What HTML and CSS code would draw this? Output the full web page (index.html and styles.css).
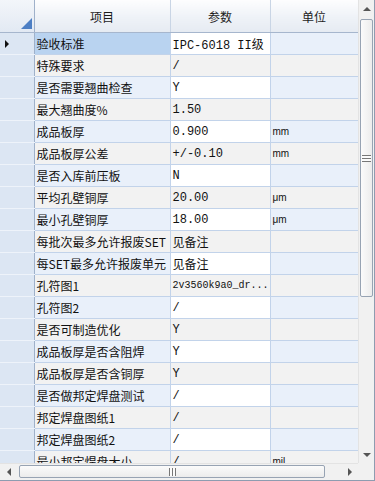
FILE: index.html
```html
<!DOCTYPE html>
<html lang="zh-CN">
<head>
    <meta charset="UTF-8">
    <title>参数</title>
    <link rel="stylesheet" href="styles.css">
</head>
<body>
    <div class="grid">
        <div class="view">
            <table class="sheet">
                <colgroup>
                    <col class="c-rh"><col class="c-item"><col class="c-val"><col class="c-unit">
                </colgroup>
                <thead>
                    <tr>
                        <th class="corner"><span class="tri"></span></th>
                        <th>项目</th>
                        <th>参数</th>
                        <th>单位</th>
                    </tr>
                </thead>
                <tbody>
                    <tr class="sel"><td class="rh"><span class="cur"></span></td><td class="item">验收标准</td><td class="val">IPC-6018 II级</td><td class="unit"></td></tr>
                    <tr><td class="rh"></td><td class="item">特殊要求</td><td class="val">/</td><td class="unit"></td></tr>
                    <tr><td class="rh"></td><td class="item">是否需要翘曲检查</td><td class="val">Y</td><td class="unit"></td></tr>
                    <tr><td class="rh"></td><td class="item">最大翘曲度%</td><td class="val">1.50</td><td class="unit"></td></tr>
                    <tr><td class="rh"></td><td class="item">成品板厚</td><td class="val">0.900</td><td class="unit">mm</td></tr>
                    <tr><td class="rh"></td><td class="item">成品板厚公差</td><td class="val">+/-0.10</td><td class="unit">mm</td></tr>
                    <tr><td class="rh"></td><td class="item">是否入库前压板</td><td class="val">N</td><td class="unit"></td></tr>
                    <tr><td class="rh"></td><td class="item">平均孔壁铜厚</td><td class="val">20.00</td><td class="unit">μm</td></tr>
                    <tr><td class="rh"></td><td class="item">最小孔壁铜厚</td><td class="val">18.00</td><td class="unit">μm</td></tr>
                    <tr><td class="rh"></td><td class="item">每批次最多允许报废SET</td><td class="val cjk">见备注</td><td class="unit"></td></tr>
                    <tr><td class="rh"></td><td class="item">每SET最多允许报废单元</td><td class="val cjk">见备注</td><td class="unit"></td></tr>
                    <tr><td class="rh"></td><td class="item">孔符图1</td><td class="val small">2v3560k9a0_dr...</td><td class="unit"></td></tr>
                    <tr><td class="rh"></td><td class="item">孔符图2</td><td class="val">/</td><td class="unit"></td></tr>
                    <tr><td class="rh"></td><td class="item">是否可制造优化</td><td class="val">Y</td><td class="unit"></td></tr>
                    <tr><td class="rh"></td><td class="item">成品板厚是否含阻焊</td><td class="val">Y</td><td class="unit"></td></tr>
                    <tr><td class="rh"></td><td class="item">成品板厚是否含铜厚</td><td class="val">Y</td><td class="unit"></td></tr>
                    <tr><td class="rh"></td><td class="item">是否做邦定焊盘测试</td><td class="val">/</td><td class="unit"></td></tr>
                    <tr><td class="rh"></td><td class="item">邦定焊盘图纸1</td><td class="val">/</td><td class="unit"></td></tr>
                    <tr><td class="rh"></td><td class="item">邦定焊盘图纸2</td><td class="val">/</td><td class="unit"></td></tr>
                    <tr><td class="rh"></td><td class="item">最小邦定焊盘大小</td><td class="val">/</td><td class="unit">mil</td></tr>
                </tbody>
            </table>
        </div>

        <!-- vertical scrollbar -->
        <div class="vbar">
            <div class="arrow up"></div>
            <div class="vtrack">
                <div class="vthumb"><span class="grip-h"></span></div>
            </div>
            <div class="arrow down"></div>
        </div>

        <!-- horizontal scrollbar -->
        <div class="hbar">
            <div class="arrow left"></div>
            <div class="htrack">
                <div class="hthumb"><span class="grip-v"></span></div>
            </div>
            <div class="arrow right"></div>
        </div>
        <div class="sizer"></div>
    </div>
</body>
</html>
```

FILE: styles.css
```css
body {
    margin: 0;
    background: #fff;
    font-family: "Noto Sans CJK SC", "Liberation Sans", sans-serif;
}
.grid {
    display: grid;
    grid-template-columns: 358px 16px;
    grid-template-rows: 463px 17px;
    width: 374px;
    height: 480px;
    border-right: 1px solid #8e9cb0;
    border-bottom: 1px solid #8e9cb0;
    background: #f0f0f0;
}
.view {
    overflow: hidden;
    background: #fff;
}
.sheet {
    border-collapse: collapse;
    table-layout: fixed;
    width: 358px;
}
.c-rh { width: 34px; }
.c-item { width: 136px; }
.c-val { width: 100px; }
.c-unit { width: 88px; }

.sheet th {
    height: 32px;
    padding: 0;
    font-weight: normal;
    font-size: 12px;
    color: #1c1c1c;
    background: linear-gradient(#fdfdfe, #eef2f7 55%, #e6ebf2);
    border-right: 1px solid #c9d5e5;
    border-bottom: 1px solid #a6b6cd;
    text-align: center;
}
.sheet th.corner {
    position: relative;
    background: linear-gradient(#f3f6fa, #e2e9f3);
    border-right: 1px solid #9fb1ca;
}
.tri {
    position: absolute;
    right: 2px;
    bottom: 3px;
    width: 0;
    height: 0;
    border-left: 11px solid transparent;
    border-bottom: 11px solid #4d7fc4;
}
.sheet td {
    height: 21px;
    padding: 0 0 0 2px;
    border-right: 1px solid #c2d3ea;
    border-bottom: 1px solid #c2d3ea;
    white-space: nowrap;
    overflow: hidden;
    color: #111;
}
.sheet td.rh {
    position: relative;
    padding: 0;
    background: #dce6f3;
    border-right: 1px solid #9fb1ca;
    border-bottom: 1px solid #eef3fa;
}
.cur {
    position: absolute;
    left: 5px;
    top: 7px;
    width: 0;
    height: 0;
    border-top: 4px solid transparent;
    border-bottom: 4px solid transparent;
    border-left: 4px solid #111;
}
.item {
    font-size: 12px;
    background: #e9f0fa;
}
.val {
    font-family: "Liberation Mono", "Noto Sans CJK SC", monospace;
    font-size: 12px;
    background: #fff;
}
.val.cjk {
    font-family: "Noto Sans CJK SC", sans-serif;
}
.val.small {
    font-size: 10px;
}
.unit {
    font-family: "Liberation Sans", sans-serif;
    font-size: 10px;
    background: #e9f0fa;
}
.sheet tbody tr:nth-child(even) td.item,
.sheet tbody tr:nth-child(even) td.val,
.sheet tbody tr:nth-child(even) td.unit {
    background: #f2f2f2;
}
.sheet tr.sel td.item {
    background: #b9d3f0;
}

/* scrollbars */
.vbar {
    display: flex;
    flex-direction: column;
    background: #f1f1f1;
    border-left: 1px solid #e3e3e3;
}
.vtrack {
    flex: 1;
    padding: 2px 1px;
}
.vthumb {
    height: 276px;
    display: flex;
    align-items: center;
    justify-content: center;
    border: 1px solid #97a3b3;
    border-radius: 2px;
    background: linear-gradient(90deg, #fbfbfb, #ececec);
}
.grip-h {
    width: 9px;
    height: 5px;
    border-top: 1px solid #777;
    border-bottom: 1px solid #777;
    background: linear-gradient(#fbfbfb 40%, #777 40%, #777 60%, #fbfbfb 60%);
}
.hbar {
    display: flex;
    background: #f1f1f1;
    border-top: 1px solid #e3e3e3;
}
.htrack {
    flex: 1;
    padding: 1px 2px;
}
.hthumb {
    width: 306px;
    height: 13px;
    margin-left: 0;
    display: flex;
    align-items: center;
    justify-content: center;
    border: 1px solid #97a3b3;
    border-radius: 2px;
    background: linear-gradient(#fbfbfb, #ececec);
    box-sizing: border-box;
}
.grip-v {
    width: 5px;
    height: 8px;
    border-left: 1px solid #777;
    border-right: 1px solid #777;
    background: linear-gradient(90deg, #fbfbfb 40%, #777 40%, #777 60%, #fbfbfb 60%);
}
.sizer {
    background: #f1f1f1;
}
.arrow {
    flex: none;
    width: 16px;
    height: 17px;
    display: flex;
    align-items: center;
    justify-content: center;
}
.arrow::after {
    content: "";
    width: 0;
    height: 0;
}
.arrow.up::after {
    border-left: 4px solid transparent;
    border-right: 4px solid transparent;
    border-bottom: 4px solid #555;
}
.arrow.down::after {
    border-left: 4px solid transparent;
    border-right: 4px solid transparent;
    border-top: 4px solid #555;
}
.arrow.left::after {
    border-top: 4px solid transparent;
    border-bottom: 4px solid transparent;
    border-right: 4px solid #555;
}
.arrow.right::after {
    border-top: 4px solid transparent;
    border-bottom: 4px solid transparent;
    border-left: 4px solid #555;
}
.hbar .arrow {
    width: 17px;
    height: 16px;
}
```
